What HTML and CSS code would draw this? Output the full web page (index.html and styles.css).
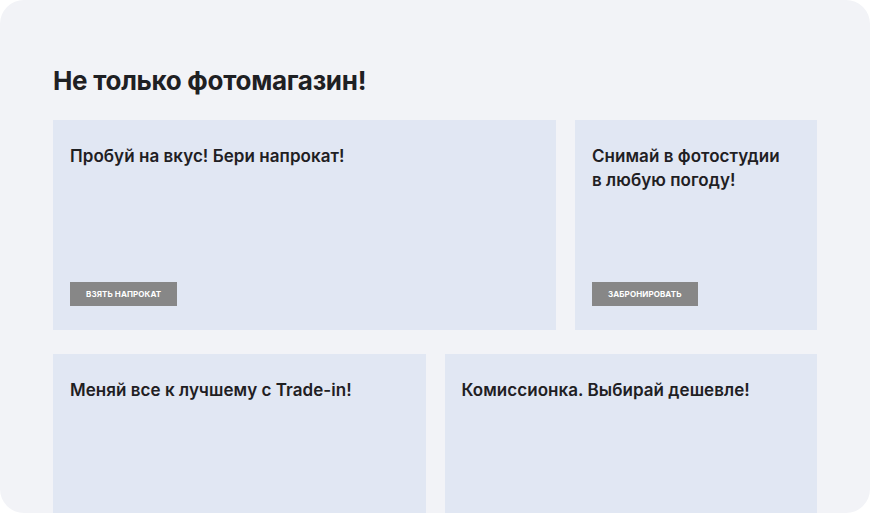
FILE: index.html
```html
<!DOCTYPE html>
<html lang="ru">
<head>
    <meta charset="UTF-8">
    <meta name="viewport" content="width=device-width, initial-scale=1.0">
    <title>Не только фотомагазин!</title>
    <link rel="stylesheet" href="styles.css">
</head>
<body>

<!-- Блок услуг -->
<section class="services">
    <h2 class="services-title">Не только фотомагазин!</h2>

    <div class="services-row services-row-top">
        <div class="service-card">
            <h3>Пробуй на вкус! Бери напрокат!</h3>
            <a href="#" class="service-btn">Взять напрокат</a>
        </div>
        <div class="service-card">
            <h3>Снимай в фотостудии<br>в любую погоду!</h3>
            <a href="#" class="service-btn">Забронировать</a>
        </div>
    </div>

    <div class="services-row services-row-bottom">
        <div class="service-card">
            <h3>Меняй все к лучшему с Trade-in!</h3>
        </div>
        <div class="service-card">
            <h3>Комиссионка. Выбирай дешевле!</h3>
        </div>
    </div>
</section>

</body>
</html>
```

FILE: styles.css
```css
/* общие стили */
body {
    margin: 0;
    background: #ffffff;
    font-family: Inter, "Noto Sans", sans-serif;
    color: #1f2023;
}

/* контейнер блока */
.services {
    box-sizing: border-box;
    width: 870px;
    height: 513px;
    padding: 0 53px;
    background: #f2f3f7;
    border-radius: 24px;
    overflow: hidden;
}
.services-title {
    margin: 0;
    padding-top: 64px;
    padding-bottom: 22px;
    font-size: 26px;
    line-height: 34px;
    font-weight: 700;
    letter-spacing: -0.3px;
}

/* ряды карточек */
.services-row {
    display: grid;
    gap: 19px;
    margin-bottom: 24px;
}
.services-row-top {
    grid-template-columns: 1fr 242px;
}
.services-row-bottom {
    grid-template-columns: 1fr 1fr;
}

.service-card {
    display: flex;
    flex-direction: column;
    align-items: flex-start;
    height: 210px;
    box-sizing: border-box;
    padding: 24px 17px 24px;
    background: #e1e7f3;
}
.service-card h3 {
    margin: 0;
    font-size: 17px;
    line-height: 24px;
    font-weight: 600;
    letter-spacing: 0.05px;
}

.service-btn {
    margin-top: auto;
    display: inline-block;
    padding: 0 16px;
    height: 24px;
    line-height: 24px;
    background: #878787;
    color: #ffffff;
    font-size: 8px;
    font-weight: 700;
    letter-spacing: 0.1px;
    text-transform: uppercase;
    text-decoration: none;
}
```
